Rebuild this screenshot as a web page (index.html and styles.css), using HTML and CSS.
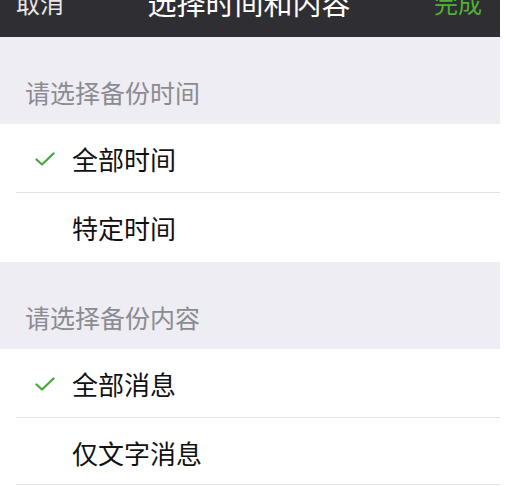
FILE: index.html
```
<!DOCTYPE html>
<html lang="zh-CN">

<head>
    <meta charset="UTF-8">
    <meta name="viewport" content="width=device-width, initial-scale=1.0">
    <title>选择时间和内容</title>
    <link rel="stylesheet" href="styles.css">
</head>

<body>
    <div class="screen">
        <div class="nav-bar">
            <span class="nav-btn">取消</span>
            <span class="nav-title">选择时间和内容</span>
            <span class="nav-btn done">完成</span>
        </div>

        <div class="group-title">请选择备份时间</div>
        <div class="group">
            <div class="row checked">
                <svg class="check" width="20" height="14" viewBox="0 0 20 14">
                    <path d="M1.5 7.5 L7 12.5 L18.5 1.5" fill="none" stroke="#43a83a" stroke-width="2.2" stroke-linecap="round" stroke-linejoin="round" />
                </svg>
                <span class="label">全部时间</span>
            </div>
            <div class="row">
                <span class="label">特定时间</span>
            </div>
        </div>

        <div class="group-title">请选择备份内容</div>
        <div class="group">
            <div class="row checked">
                <svg class="check" width="20" height="14" viewBox="0 0 20 14">
                    <path d="M1.5 7.5 L7 12.5 L18.5 1.5" fill="none" stroke="#43a83a" stroke-width="2.2" stroke-linecap="round" stroke-linejoin="round" />
                </svg>
                <span class="label">全部消息</span>
            </div>
            <div class="row last">
                <span class="label">仅文字消息</span>
            </div>
        </div>
    </div>
</body>

</html>
```

FILE: styles.css
```
* {
    margin: 0;
    padding: 0;
    box-sizing: border-box;
}

body {
    font-family: "Noto Sans CJK SC", "Noto Sans", sans-serif;
    background-color: white;
}

.screen {
    width: 500px;
    height: 486px;
    overflow: hidden;
    display: flex;
    flex-direction: column;
    background-color: #ededf3;
}

.nav-bar {
    height: 37px;
    flex-shrink: 0;
    background-color: #2f2f33;
    display: flex;
    justify-content: space-between;
    align-items: flex-start;
    padding: 0 18px 0 16px;
    overflow: hidden;
    color: white;
}

.nav-btn {
    font-size: 24px;
    line-height: 30px;
    margin-top: -12px;
    color: #e8e8ea;
}

.nav-btn.done {
    color: #4db233;
}

.nav-title {
    font-size: 29px;
    line-height: 34px;
    margin-top: -15px;
}

.group-title {
    height: 87px;
    flex-shrink: 0;
    padding: 40px 0 0 25px;
    font-size: 25px;
    line-height: 30px;
    color: #8b8b90;
}

.group {
    background-color: white;
    display: flex;
    flex-direction: column;
}

.row {
    height: 69px;
    display: flex;
    align-items: center;
    padding-left: 72px;
    position: relative;
}

.row::after {
    content: "";
    position: absolute;
    left: 16px;
    right: 0;
    bottom: 0;
    height: 1px;
    background-color: #e3e3e6;
}

.group .row:last-child:not(.last)::after {
    display: none;
}

.row.last::after {
    bottom: 2px;
}

.check {
    position: absolute;
    left: 35px;
    top: 28px;
}

.label {
    font-size: 26px;
    line-height: 30px;
    color: #111;
}
```
